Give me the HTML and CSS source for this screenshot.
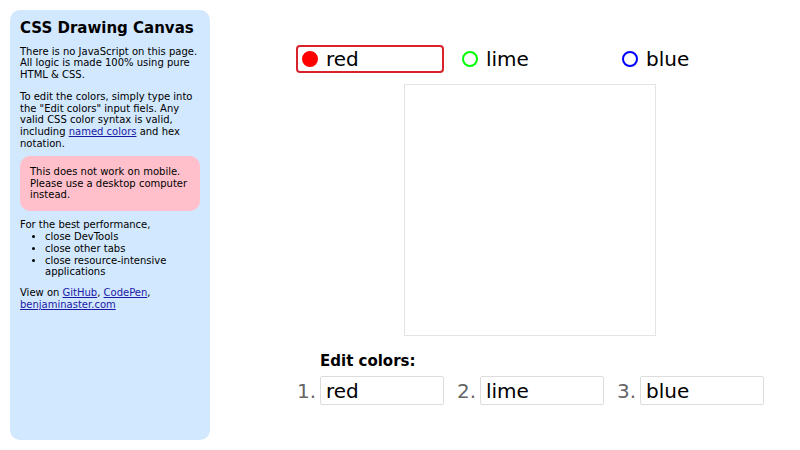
FILE: index.html
```html
<!DOCTYPE html>
<html lang="en">
<head>
<meta charset="utf-8">
<title>CSS Drawing Canvas</title>
<link rel="stylesheet" href="styles.css">
</head>
<body>
<aside class="sidebar">
  <h1 class="title">CSS Drawing Canvas</h1>
  <p class="text">There is no JavaScript on this page. All logic is made 100% using pure HTML &amp; CSS.</p>
  <p class="text short">To edit the colors, simply type into the "Edit colors" input fiels. Any valid CSS color syntax is valid, including <a href="#">named colors</a> and hex notation.</p>
  <div class="warning">This does not work on mobile. Please use a desktop computer instead.</div>
  <p class="text tight">For the best performance,</p>
  <ul class="tips">
    <li>close DevTools</li>
    <li>close other tabs</li>
    <li>close resource-intensive applications</li>
  </ul>
  <p class="text">View on <a href="#">GitHub</a>, <a href="#">CodePen</a>, <a href="#">benjaminaster.com</a></p>
</aside>
<main class="main">
  <div class="app">
    <div class="palette">
      <label class="swatch active"><span class="dot dot-red"></span><span class="swatch-name">red</span></label>
      <label class="swatch"><span class="dot dot-lime"></span><span class="swatch-name">lime</span></label>
      <label class="swatch"><span class="dot dot-blue"></span><span class="swatch-name">blue</span></label>
    </div>
    <div class="canvas"></div>
    <div class="editor">
      <div class="editor-title">Edit colors:</div>
      <ol class="fields">
        <li class="field"><input class="field-input" type="text" value="red"></li>
        <li class="field"><input class="field-input" type="text" value="lime"></li>
        <li class="field"><input class="field-input" type="text" value="blue"></li>
      </ol>
    </div>
  </div>
</main>
</body>
</html>
```
FILE: styles.css
```css
* { box-sizing: border-box; }
html, body { margin: 0; padding: 0; }
body {
  display: flex;
  width: 800px;
  height: 450px;
  font-family: "DejaVu Sans", sans-serif;
  color: #000;
  background: #fff;
  overflow: hidden;
}
.sidebar {
  flex: 0 0 200px;
  margin: 10px;
  height: 430px;
  padding: 10px;
  background: #d2e8fe;
  border-radius: 10px;
  font-size: 10px;
  line-height: 11.8px;
}
.title {
  margin: 0 0 8px;
  font-size: 15px;
  line-height: 17.5px;
  font-weight: bold;
}
.text { margin: 0 0 10px; }
.text.short { margin-bottom: 6px; }
.text.tight { margin-bottom: 0; }
.sidebar a { color: #1a1aa6; }
.warning {
  background: #ffc0cb;
  border-radius: 10px;
  padding: 10px;
  margin: 0 0 8px;
}
.tips {
  margin: 0 0 9px;
  padding-left: 25px;
}
.main {
  flex: 1;
  display: flex;
  justify-content: center;
  padding: 45px 0 0 40px;
}
.app {
  width: 468px;
  display: flex;
  flex-direction: column;
  align-items: center;
}
.palette {
  display: flex;
  gap: 12px;
  width: 100%;
}
.swatch {
  width: 148px;
  height: 28px;
  display: flex;
  align-items: center;
  gap: 8px;
  padding: 0 4px;
  border: 2px solid transparent;
  border-radius: 4px;
  font-size: 20px;
}
.swatch.active { border-color: #d9232b; }
.dot {
  width: 16px;
  height: 16px;
  border-radius: 50%;
  border: 2px solid;
}
.dot-red { background: #f00; border-color: #f00; }
.dot-lime { border-color: #0f0; }
.dot-blue { border-color: #00f; }
.canvas {
  margin-top: 11px;
  width: 252px;
  height: 252px;
  border: 1px solid #e4e4e4;
}
.editor {
  width: 100%;
  margin-top: 16px;
}
.editor-title {
  padding-left: 24px;
  font-size: 15px;
  font-weight: bold;
}
.fields {
  list-style: none;
  counter-reset: item;
  display: flex;
  gap: 13px;
  margin: 6px 0 0;
  padding: 0 0 0 1px;
}
.field {
  counter-increment: item;
  display: flex;
  align-items: center;
  gap: 4px;
  font-size: 20px;
}
.field::before {
  content: counter(item) ".";
  color: #666;
  width: 19px;
}
.field-input {
  width: 124px;
  height: 29px;
  border: 1px solid #ddd;
  border-radius: 2px;
  padding: 0 5px;
  font: 20px "DejaVu Sans", sans-serif;
  color: #000;
  background: #fff;
}
```
